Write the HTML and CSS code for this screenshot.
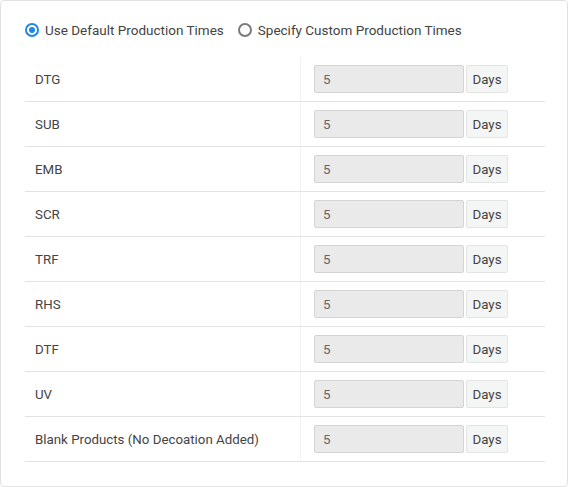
FILE: index.html
```html
<!DOCTYPE html>
<html lang="en">
<head>
  <meta charset="UTF-8" />
  <meta name="viewport" content="width=device-width, initial-scale=1.0"/>
  <title>Production Times</title>
  <link rel="stylesheet" href="styles.css">
</head>
<body>

  <div class="card">
    <div class="radio-row">
      <label class="radio checked"><span class="dot"></span>Use Default Production Times</label>
      <label class="radio"><span class="dot"></span>Specify Custom Production Times</label>
    </div>

    <table class="times">
      <tr><td class="name">DTG</td><td class="value"><div class="group"><input type="text" value="5" disabled><span class="addon">Days</span></div></td></tr>
      <tr><td class="name">SUB</td><td class="value"><div class="group"><input type="text" value="5" disabled><span class="addon">Days</span></div></td></tr>
      <tr><td class="name">EMB</td><td class="value"><div class="group"><input type="text" value="5" disabled><span class="addon">Days</span></div></td></tr>
      <tr><td class="name">SCR</td><td class="value"><div class="group"><input type="text" value="5" disabled><span class="addon">Days</span></div></td></tr>
      <tr><td class="name">TRF</td><td class="value"><div class="group"><input type="text" value="5" disabled><span class="addon">Days</span></div></td></tr>
      <tr><td class="name">RHS</td><td class="value"><div class="group"><input type="text" value="5" disabled><span class="addon">Days</span></div></td></tr>
      <tr><td class="name">DTF</td><td class="value"><div class="group"><input type="text" value="5" disabled><span class="addon">Days</span></div></td></tr>
      <tr><td class="name">UV</td><td class="value"><div class="group"><input type="text" value="5" disabled><span class="addon">Days</span></div></td></tr>
      <tr><td class="name">Blank Products (No Decoation Added)</td><td class="value"><div class="group"><input type="text" value="5" disabled><span class="addon">Days</span></div></td></tr>
    </table>
  </div>

</body>
</html>
```

FILE: styles.css
```css
body {
  margin: 0;
  font-family: Roboto, "Liberation Sans", Arial, sans-serif;
  font-size: 13.3px;
  color: #444;
  background: #fff;
}
.card {
  width: 568px;
  height: 487px;
  box-sizing: border-box;
  border: 1px solid #e2e2e2;
  border-radius: 4px;
  padding: 19px 22px 0 24px;
}
.radio-row {
  display: flex;
  gap: 14px;
  height: 20px;
  line-height: 20px;
  margin-bottom: 17px;
  font-size: 13.5px;
}
.radio {
  display: flex;
  align-items: center;
  gap: 6px;
}
.dot {
  width: 14px;
  height: 14px;
  box-sizing: border-box;
  border: 2px solid #7a7a7a;
  border-radius: 50%;
  position: relative;
}
.checked .dot {
  border-color: #1e88e5;
}
.checked .dot::after {
  content: "";
  position: absolute;
  left: 2px;
  top: 2px;
  width: 6px;
  height: 6px;
  border-radius: 50%;
  background: #1e88e5;
}
.times {
  width: 520px;
  border-collapse: collapse;
}
.times td {
  height: 44px;
  padding: 0;
  border-bottom: 1px solid #e3e3e3;
}
.name {
  width: 265px;
  padding-left: 10px !important;
}
.value {
  border-left: 1px solid #f3f3f3;
  padding-left: 13px !important;
}
.group {
  display: flex;
  gap: 2px;
  height: 28px;
}
.group input {
  width: 150px;
  box-sizing: border-box;
  margin: 0;
  padding: 0 8px;
  font-family: inherit;
  font-size: 13.3px;
  color: #666;
  background: #eaeaea;
  border: 1px solid #d4d4d4;
  border-radius: 2px;
}
.addon {
  width: 42px;
  box-sizing: border-box;
  display: flex;
  align-items: center;
  justify-content: center;
  background: #f4f5f5;
  border: 1px solid #e4e4e4;
  border-radius: 2px;
  color: #444;
}
```
